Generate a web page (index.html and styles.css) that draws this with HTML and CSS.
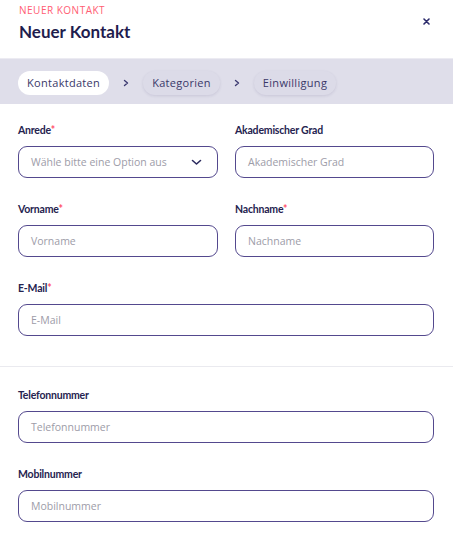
FILE: index.html
```html
<!DOCTYPE html>
<html lang="de">
<head>
<meta charset="utf-8">
<title>Neuer Kontakt</title>
<link rel="stylesheet" href="styles.css">
</head>
<body>
<div class="dialog">
  <header class="head">
    <div class="head-text">
      <div class="eyebrow">NEUER KONTAKT</div>
      <h1 class="title">Neuer Kontakt</h1>
    </div>
    <button class="close" aria-label="Schließen">
      <svg width="7" height="7" viewBox="0 0 7 7"><path d="M1 1L6 6M6 1L1 6" stroke="#2b2a6b" stroke-width="1.6" stroke-linecap="round"/></svg>
    </button>
  </header>
  <nav class="steps">
    <span class="pill active">Kontaktdaten</span>
    <span class="sep"><svg width="6" height="8" viewBox="0 0 6 8"><path d="M1.5 1.5L4.5 4L1.5 6.5" fill="none" stroke="#3b3970" stroke-width="1.4" stroke-linecap="round" stroke-linejoin="round"/></svg></span>
    <span class="pill">Kategorien</span>
    <span class="sep"><svg width="6" height="8" viewBox="0 0 6 8"><path d="M1.5 1.5L4.5 4L1.5 6.5" fill="none" stroke="#3b3970" stroke-width="1.4" stroke-linecap="round" stroke-linejoin="round"/></svg></span>
    <span class="pill">Einwilligung</span>
  </nav>
  <section class="section first">
    <div class="grid">
      <div class="field">
        <label class="label">Anrede<span class="req">*</span></label>
        <div class="input select"><span class="ph">Wähle bitte eine Option aus</span>
          <svg width="11" height="7" viewBox="0 0 11 7"><path d="M1.5 1.5L5.5 5L9.5 1.5" fill="none" stroke="#2b2a5e" stroke-width="1.6" stroke-linecap="round" stroke-linejoin="round"/></svg>
        </div>
      </div>
      <div class="field">
        <label class="label">Akademischer Grad</label>
        <div class="input"><span class="ph">Akademischer Grad</span></div>
      </div>
      <div class="field">
        <label class="label">Vorname<span class="req">*</span></label>
        <div class="input"><span class="ph">Vorname</span></div>
      </div>
      <div class="field">
        <label class="label">Nachname<span class="req">*</span></label>
        <div class="input"><span class="ph">Nachname</span></div>
      </div>
      <div class="field wide">
        <label class="label">E-Mail<span class="req">*</span></label>
        <div class="input"><span class="ph">E-Mail</span></div>
      </div>
    </div>
  </section>
  <section class="section second">
    <div class="field">
      <label class="label">Telefonnummer</label>
      <div class="input"><span class="ph">Telefonnummer</span></div>
    </div>
    <div class="field">
      <label class="label">Mobilnummer</label>
      <div class="input"><span class="ph">Mobilnummer</span></div>
    </div>
  </section>
</div>
</body>
</html>
```
FILE: styles.css
```css
* { box-sizing: border-box; }
html, body { margin: 0; padding: 0; background: #ffffff; }
body {
  font-family: "Open Sans", "Noto Sans", sans-serif;
  color: #25234f;
  width: 453px;
  height: 536px;
  overflow: hidden;
}
.dialog { display: flex; flex-direction: column; }
.head {
  display: flex;
  justify-content: space-between;
  align-items: flex-start;
  padding: 4px 19px 0 19px;
  height: 58px;
}
.eyebrow {
  font-size: 10px;
  line-height: 12px;
  color: #ff5d73;
  letter-spacing: 0.5px;
}
.title {
  margin: 5px 0 0 0;
  font-family: "Lato", sans-serif;
  font-size: 17px;
  line-height: 22px;
  font-weight: 700;
  color: #1f1d4e;
}
.close {
  border: 0;
  background: none;
  padding: 0;
  margin: 13px 3px 0 0;
  width: 9px;
  height: 9px;
  display: flex;
  align-items: center;
  justify-content: center;
}
.steps {
  display: flex;
  align-items: center;
  background: #dfdeea;
  border-top: 1px solid #ecebf2;
  height: 46px;
  padding: 2px 18px 0 18px;
}
.pill {
  flex: none;
  height: 24px;
  line-height: 24px;
  padding: 0 9px;
  border-radius: 12px;
  font-size: 11px;
  letter-spacing: 0.3px;
  color: #3a3868;
  background: #dcdbe8;
  box-shadow: 0 1px 3px rgba(40, 36, 90, 0.12);
  white-space: nowrap;
}
.pill.active {
  background: #ffffff;
  box-shadow: none;
}
.sep {
  flex: none;
  display: flex;
  align-items: center;
  width: 34px;
  justify-content: center;
}
.section { padding: 0 19px 0 18px; }
.section.first {
  padding-top: 18px;
  padding-bottom: 7px;
  border-bottom: 1px solid #eaeaef;
}
.section.second { padding-top: 20px; }
.grid {
  display: grid;
  grid-template-columns: 200px 199px;
  column-gap: 17px;
}
.field { margin-bottom: 23px; display: flex; flex-direction: column; }
.field.wide { grid-column: 1 / span 2; }
.label {
  font-family: "Lato", sans-serif;
  font-size: 10.5px;
  letter-spacing: -0.2px;
  line-height: 16px;
  font-weight: 700;
  color: #25234f;
  margin-bottom: 8px;
}
.req { color: #ff4d6a; }
.input {
  height: 32px;
  border: 1.5px solid #54498e;
  border-radius: 9px;
  display: flex;
  align-items: center;
  justify-content: space-between;
  padding: 0 12px 0 12px;
}
.select { padding-right: 15px; }
.ph {
  font-size: 10.5px;
  color: #9d9ca8;
}
```
